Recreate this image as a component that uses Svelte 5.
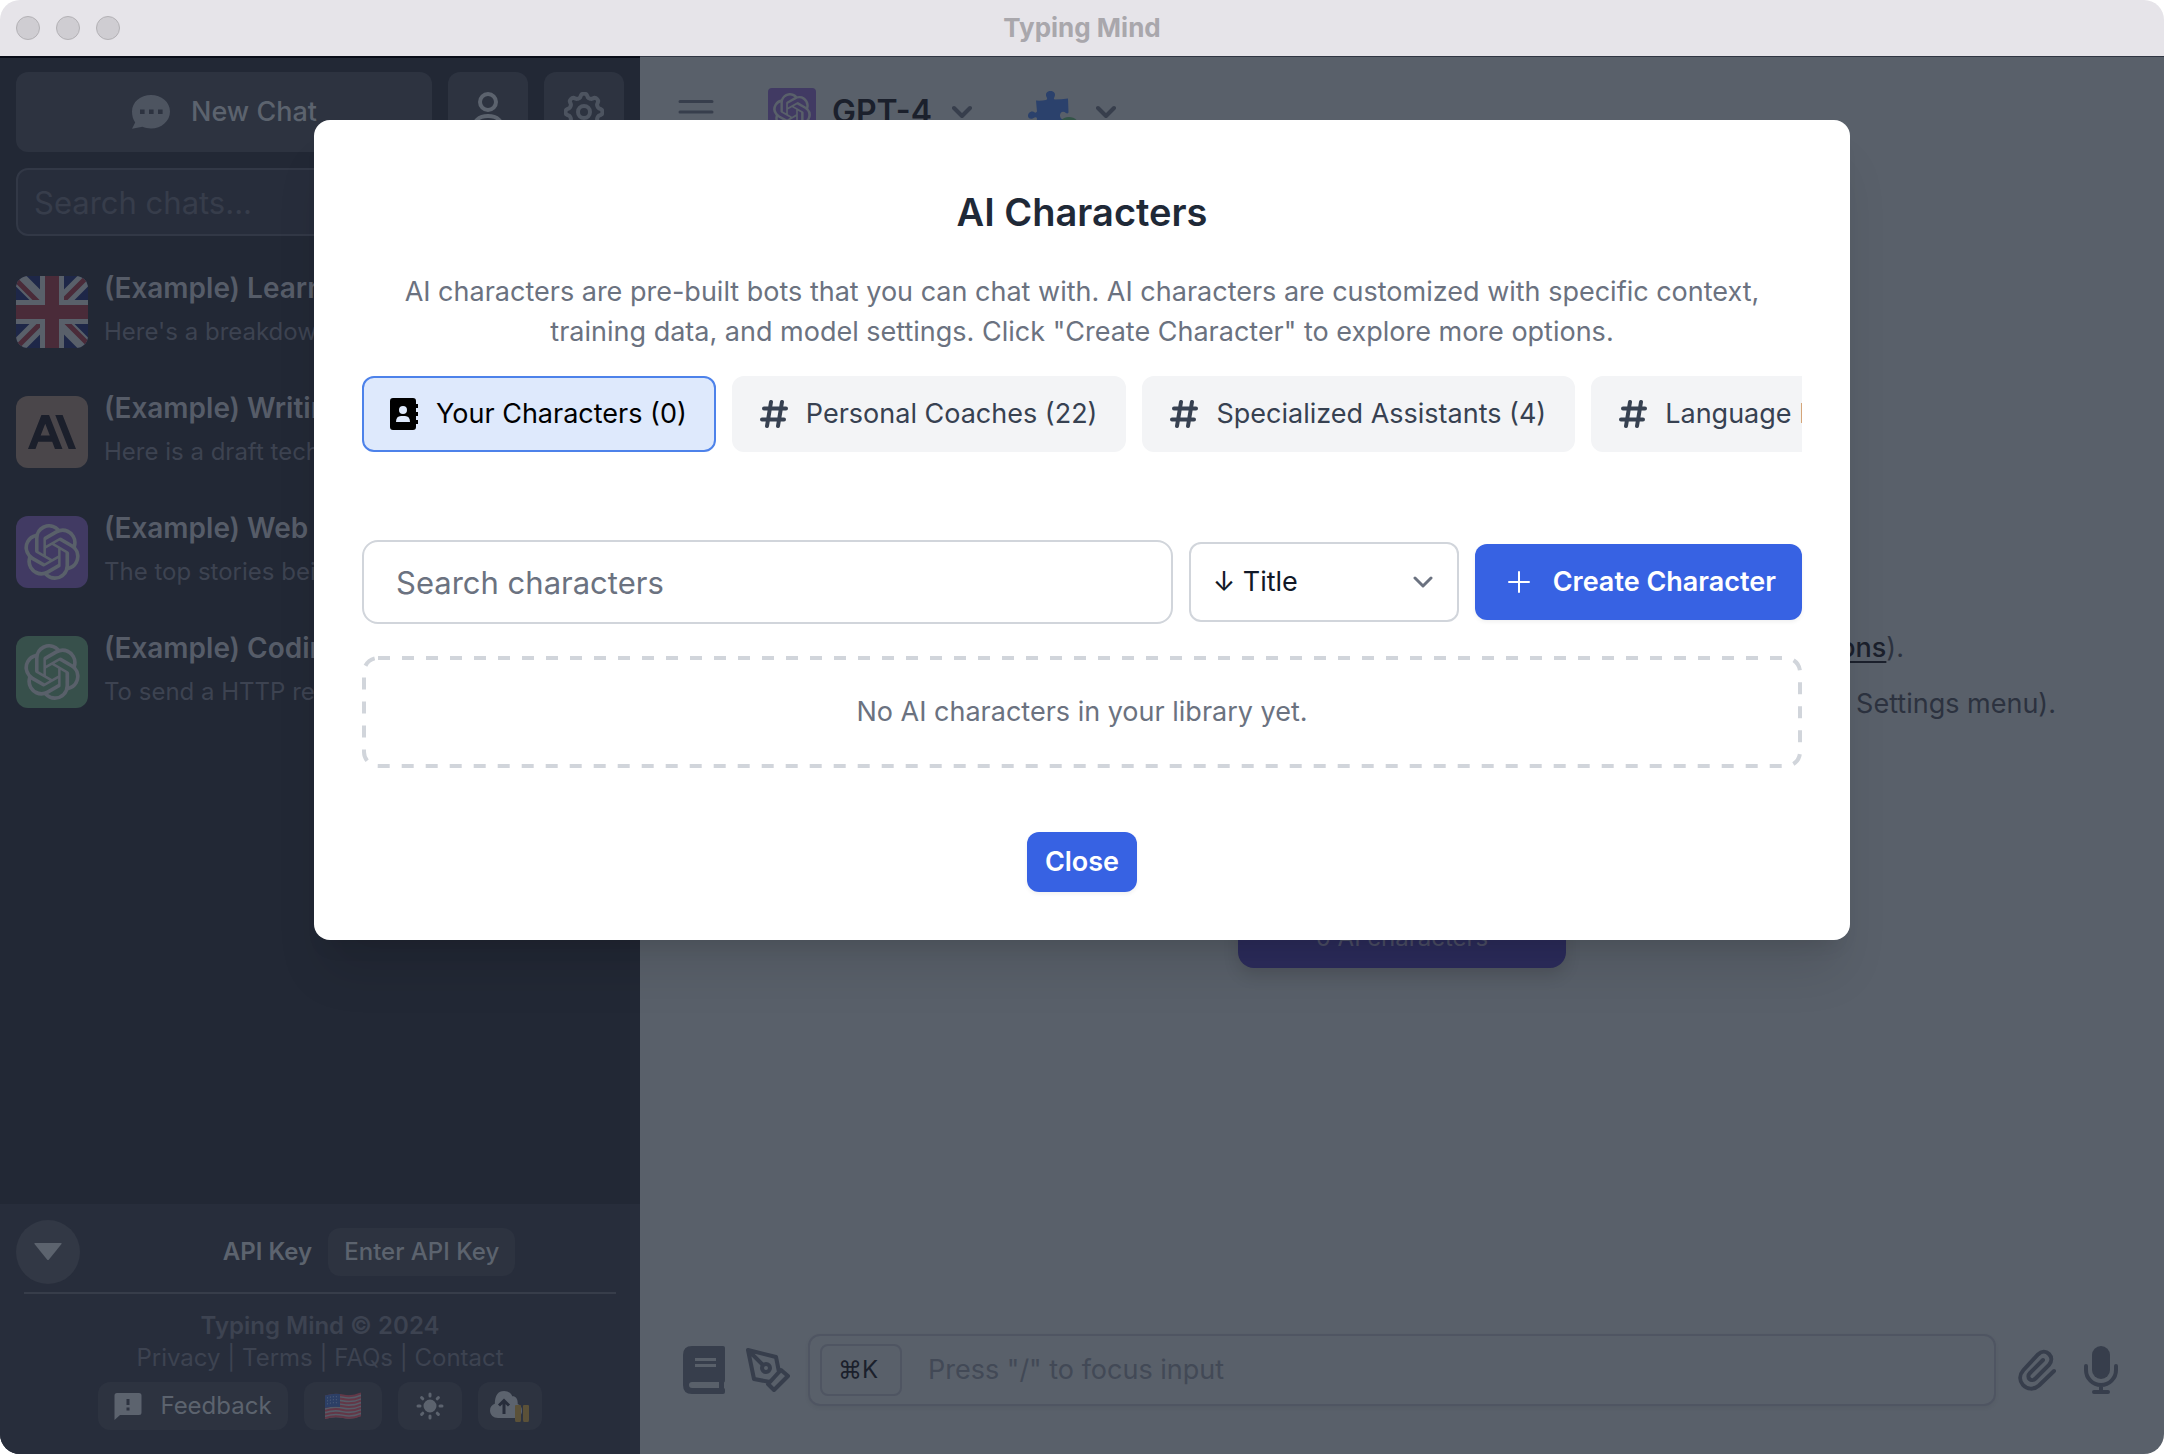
<script>
  const openai =
    'M22.2819 9.8211a5.9847 5.9847 0 0 0-.5157-4.9108 6.0462 6.0462 0 0 0-6.5098-2.9A6.0651 6.0651 0 0 0 4.9807 4.1818a5.9847 5.9847 0 0 0-3.9977 2.9 6.0462 6.0462 0 0 0 .7427 7.0966 5.98 5.98 0 0 0 .511 4.9107 6.051 6.051 0 0 0 6.5146 2.9001A5.9847 5.9847 0 0 0 13.2599 24a6.0557 6.0557 0 0 0 5.7718-4.2058 5.9894 5.9894 0 0 0 3.9977-2.9001 6.0557 6.0557 0 0 0-.7475-7.0729zm-9.022 12.6081a4.4755 4.4755 0 0 1-2.8764-1.0408l.1419-.0804 4.7783-2.7582a.7948.7948 0 0 0 .3927-.6813v-6.7369l2.02 1.1686a.071.071 0 0 1 .038.052v5.5826a4.504 4.504 0 0 1-4.4945 4.4944zm-9.6607-4.1254a4.4708 4.4708 0 0 1-.5346-3.0137l.142.0852 4.783 2.7582a.7712.7712 0 0 0 .7806 0l5.8428-3.3685v2.3324a.0804.0804 0 0 1-.0332.0615L9.74 19.9502a4.4992 4.4992 0 0 1-6.1408-1.6464zM2.3408 7.8956a4.485 4.485 0 0 1 2.3655-1.9728V11.6a.7664.7664 0 0 0 .3879.6765l5.8144 3.3543-2.0201 1.1685a.0757.0757 0 0 1-.071 0l-4.8303-2.7865A4.504 4.504 0 0 1 2.3408 7.872zm16.5963 3.8558L13.1038 8.364 15.1192 7.2a.0757.0757 0 0 1 .071 0l4.8303 2.7913a4.4944 4.4944 0 0 1-.6765 8.1042v-5.6772a.79.79 0 0 0-.407-.667zm2.0107-3.0231l-.142-.0852-4.7735-2.7818a.7759.7759 0 0 0-.7854 0L9.409 9.2297V6.8974a.0662.0662 0 0 1 .0284-.0615l4.8303-2.7866a4.4992 4.4992 0 0 1 6.6802 4.66zM8.3065 12.863l-2.02-1.1638a.0804.0804 0 0 1-.038-.0567V6.0742a4.4992 4.4992 0 0 1 7.3757-3.4537l-.142.0805L8.704 5.459a.7948.7948 0 0 0-.3927.6813zm1.0976-2.3654l2.602-1.4998 2.6069 1.4998v2.9994l-2.5974 1.4997-2.6067-1.4997Z';

  const chats = [
    { logo: 'flag', title: '(Example) Learning', text: "Here's a breakdown" },
    { logo: 'anthropic', title: '(Example) Writing', text: 'Here is a draft tech' },
    { logo: 'violet', title: '(Example) Web Search', text: 'The top stories being' },
    { logo: 'green', title: '(Example) Coding', text: 'To send a HTTP req' }
  ];

  const tabs = [
    { label: 'Your Characters (0)', active: true },
    { label: 'Personal Coaches (22)' },
    { label: 'Specialized Assistants (4)' },
    { label: 'Language Learning (3)' }
  ];

  // Eight soft teeth around a circle
  const gear =
    Array.from({ length: 96 }, (_, i) => {
      const a = (i / 96) * Math.PI * 2;
      const r = 16.5 + 2 * Math.tanh(1.8 * Math.cos(8 * a));
      return `${i ? 'L' : 'M'}${(20 + r * Math.sin(a)).toFixed(2)} ${(20 - r * Math.cos(a)).toFixed(2)}`;
    }).join('') + 'Z';

  const stripes = [0, 1, 2, 3, 4, 5, 6];
</script>

<div class="window">
  <header class="titlebar">
    <div class="lights"><span></span><span></span><span></span></div>
    <h1>Typing Mind</h1>
  </header>

  <div class="app">
    <aside>
      <div class="actions">
        <button class="new-chat">
          <svg width="40" height="36" viewBox="0 0 40 36" aria-hidden="true">
            <path fill="#4d5460" fill-rule="evenodd" d="M20 1C30.500 1 39 8 39 17.500S30.500 34.500 20 34.500c-3 0-6-.6-8.500-1.700L1 34.800l3.200-6.200C2 25.500 1 21.500 1 17.500 1 8 9.500 1 20 1zM9 15.500v4.600h4.600v-4.600zm9 0v4.600h4.600v-4.600zm9 0v4.600h4.600v-4.600z" />
          </svg>
          <span>New Chat</span>
        </button>
        <button class="square" aria-label="Profile">
          <svg width="40" height="40" viewBox="0 0 40 40" fill="none" stroke="#5c636e" stroke-width="4" aria-hidden="true">
            <circle cx="20" cy="10" r="8" /><path d="M5 38c0-9 6-14 15-14s15 5 15 14z" />
          </svg>
        </button>
        <button class="square" aria-label="Settings">
          <svg width="40" height="40" viewBox="0 0 40 40" fill="none" stroke="#4d5460" stroke-width="4" stroke-linejoin="round" aria-hidden="true">
            <path d={gear} /><circle cx="20" cy="20" r="6" />
          </svg>
        </button>
      </div>
      <input class="chat-search" type="search" placeholder="Search chats..." aria-label="Search chats" />

      <ul class="chats">
        {#each chats as chat}
          <li>
            <span class="logo {chat.logo}">
              {#if chat.logo === 'flag'}
                <svg width="72" height="72" viewBox="0 0 72 72" aria-hidden="true">
                  <path fill="#1e2748" d="M0 0h72v72H0z" />
                  <path stroke="#59606a" stroke-width="15" d="M-6-6 78 78M78-6-6 78" />
                  <path stroke="#4a2b39" stroke-width="5" d="M-3 1 33 37M39 33 75-3M75 71 39 35M33 39-3 75" />
                  <path fill="#59606a" d="M24 0h24v24h24v24H48v24H24V48H0V24h24z" />
                  <path fill="#4a2b39" d="M29 0h14v29h29v14H43v29H29V43H0V29h29z" />
                </svg>
              {:else if chat.logo === 'anthropic'}
                <svg width="48" height="48" viewBox="0 0 24 24" aria-hidden="true">
                  <path fill="#1b1f2b" d="M17.300 3.540h-3.670l6.700 16.920H24zM6.700 3.540 0 20.460h3.740l1.370-3.550h7l1.370 3.550h3.750L10.540 3.540zm-.38 10.220 2.300-5.940 2.290 5.940z" />
                </svg>
              {:else}
                <svg width="56" height="56" viewBox="0 0 24 24" aria-hidden="true"><path fill="#59606a" d={openai} /></svg>
              {/if}
            </span>
            <div class="chat-text">
              <strong>{chat.title}</strong>
              <span>{chat.text}</span>
            </div>
          </li>
        {/each}
      </ul>

      <footer>
        <div class="key-row">
          <button class="round" aria-label="Collapse">
            <svg width="28" height="18" viewBox="0 0 28 18" aria-hidden="true"><path fill="#5c636e" d="M1 0h26q1 0 .5 1L15 16.500q-1 1-2 0L.5 1Q0 0 1 0z" /></svg>
          </button>
          <div class="key">
            <strong>API Key</strong>
            <button>Enter API Key</button>
          </div>
        </div>
        <p class="copyright">Typing Mind © 2024</p>
        <p class="links"><a href="#privacy">Privacy</a> | <a href="#terms">Terms</a> | <a href="#faqs">FAQs</a> | <a href="#contact">Contact</a></p>
        <div class="tools">
          <button class="feedback">
            <svg width="28" height="28" viewBox="0 0 28 28" aria-hidden="true">
              <path fill="#5c636e" fill-rule="evenodd" d="M3 1h22q2.500 0 2.500 2.500v17Q27.500 23 25 23H6L.5 28V3.500Q.5 1 3 1zM12.500 7v6h3V7zm0 8.500v3h3v-3z" />
            </svg>
            <span>Feedback</span>
          </button>
          <button class="flag-button" aria-label="Language">
            <svg width="36" height="28" viewBox="0 0 36 28" fill="none" aria-hidden="true">
              <path fill="#565c68" d="M0 4q9-3 18-1t18-2v23q-9 4-18 2T0 27z" />
              {#each stripes as s}
                <path stroke="#633747" stroke-width="2" transform="translate(0 {s * 3.6})" d="M0 4.500q9-3 18-1t18-2" />
              {/each}
              <path fill="#2c3f66" d="M0 3.500q8-2.500 15-1.500v13q-7-1-15 1z" />
              <path stroke="#5a6880" stroke-dasharray="1 2" d="M2 6q6-2 12-1M2 9q6-2 12-1M2 12q6-2 12-1" />
            </svg>
          </button>
          <button class="small" aria-label="Theme">
            <svg width="28" height="28" viewBox="0 0 28 28" stroke="#5c636e" stroke-width="3" stroke-linecap="round" aria-hidden="true">
              <circle cx="14" cy="14" r="5" fill="#5c636e" />
              <path d="M14 2v2M14 24v2M2 14h2M24 14h2M5.600 5.600l1.200 1.200M21.200 21.200l1.200 1.200M5.600 22.400l1.200-1.200M21.200 6.800l1.200-1.200" />
            </svg>
          </button>
          <button class="small" aria-label="Cloud sync">
            <svg width="40" height="32" viewBox="0 0 40 32" aria-hidden="true">
              <path fill="#5c636e" d="M8 28C3.500 28 0 25 0 20.500 0 17 2 14.500 4.800 13.700 5 5.500 8 1 14 1c4 0 7 2 8.300 5.300C25.500 6 28 8.500 27.700 14 30.500 15 32 17 32 21c0 4-3 7-7 7z" />
              <path stroke="#272d3b" stroke-width="3" fill="none" d="M14 24V11M9 15.500l5-5 5 5" />
              <path fill="#5b5138" d="M26 15h4q1 0 1 1v14q0 2-1 2h-4q-1 0-1-2V16q0-1 1-1zM34 15h4q1 0 1 1v14q0 2-1 2h-4q-1 0-1-2V16q0-1 1-1z" />
            </svg>
          </button>
        </div>
      </footer>
    </aside>

    <main>
      <nav>
        <button class="plain menu" aria-label="Menu">
          <svg width="36" height="36" viewBox="0 0 36 36" stroke="#373e4c" stroke-width="3" stroke-linecap="round" aria-hidden="true"><path d="M2 7.500h32M2 18h32M2 28.500h32" /></svg>
        </button>
        <button class="plain model">
          <span class="model-logo"><svg width="38" height="38" viewBox="0 0 24 24" aria-hidden="true"><path fill="#59606a" d={openai} /></svg></span>
          <span>GPT-4</span>
          <svg class="chevron" width="20" height="14" viewBox="0 0 20 14" fill="none" stroke="#373e4c" stroke-width="4" stroke-linecap="round" stroke-linejoin="round" aria-hidden="true"><path d="m2 3 8 8 8-8" /></svg>
        </button>
        <button class="plain plugins" aria-label="Plugins">
          <svg width="52" height="44" viewBox="0 0 52 44" aria-hidden="true">
            <path fill="#2b416c" d="M8 10.500q5 .5 10-.5 2-1 .5-3C17 3.500 19 1 22.500 1s5.500 2.500 4 6q-1.500 2 .5 2.500 6.500 0 13-1l.5 14q-1 1.500-2.500.5c-3-2.500-6-1-6 2.500s3 5 6 2.500l2.500-.5-.5 12H8.500l.5-11q-.5-2-2.500-1C3 30 0 28.500 0 26s2.500-5.500 6-4q2 1.500 3-.5z" />
            <circle cx="41" cy="38" r="11" fill="#345548" />
          </svg>
          <svg width="20" height="14" viewBox="0 0 20 14" fill="none" stroke="#373e4c" stroke-width="4" stroke-linecap="round" stroke-linejoin="round" aria-hidden="true"><path d="m2 3 8 8 8-8" /></svg>
        </button>
      </nav>

      <div class="welcome">
        <p class="first">(<a href="#instructions">instructions</a>).</p>
        <p class="second">Settings menu).</p>
        <button class="library">0 AI characters</button>
      </div>

      <div class="composer">
        <svg width="42" height="48" viewBox="0 0 42 48" aria-hidden="true">
          <path fill="#373e4c" fill-rule="evenodd" d="M9 0h31q2 0 2 2v32q0 2-1 2.500V42q1 .5 1 2v2q0 2-2 2H9q-9 0-9-9V9q0-9 9-9zm3 12v3h21v-3zm0 6v3h21v-3zM9 36q-3 0-3 3t3 3h27v-6z" />
        </svg>
        <svg class="pen" width="44" height="44" viewBox="0 0 44 44" fill="none" stroke="#373e4c" stroke-width="4" stroke-linejoin="round" aria-hidden="true">
          <path d="m2 2 28 7 3 15-9 10L8 31zM2 2l15 15M35 22l7 6-14 14-6-6z" /><circle cx="20" cy="20" r="4" />
        </svg>
        <div class="prompt">
          <kbd>⌘K</kbd>
          <input type="text" placeholder={'Press "/" to focus input'} aria-label="Message" />
        </div>
        <svg class="clip" width="40" height="42" viewBox="0 0 40 42" fill="none" stroke="#373e4c" stroke-width="4" stroke-linecap="round" aria-hidden="true">
          <path d="M36 22 21 36.500c-5 4.500-12 4-16-.5s-3.500-10.500.5-15L20 5.500c3.500-3.500 8-3.500 11-.5s3 7.500 0 11L17.500 29.500c-2 2-4.500 2-6 .5s-1.500-4 .5-6L25 11" />
        </svg>
        <svg class="mic" width="34" height="48" viewBox="0 0 34 48" aria-hidden="true">
          <rect x="8" width="18" height="33" rx="9" fill="#373e4c" />
          <path d="M2 20v4a15 15 0 0 0 30 0v-4M17 39v6M10 46h14" fill="none" stroke="#373e4c" stroke-width="4" stroke-linecap="round" />
        </svg>
      </div>
    </main>
  </div>

  <div class="overlay">
    <div class="modal" role="dialog" aria-modal="true" aria-labelledby="modal-title">
      <h2 id="modal-title">AI Characters</h2>
      <p class="intro">
        AI characters are pre-built bots that you can chat with. AI characters are customized with specific context,<br />
        training data, and model settings. Click "Create Character" to explore more options.
      </p>

      <div class="tabs">
        {#each tabs as tab}
          <button class:active={tab.active}>
            {#if tab.active}
              <svg width="28" height="32" viewBox="0 0 28 32" aria-hidden="true">
                <path fill="#000" fill-rule="evenodd" d="M3 0h20q3 0 3 3v3h2v4h-2v4h2v4h-2v4h2v4h-2v3q0 3-3 3H3q-3 0-3-3V3q0-3 3-3zm10 8a4 4 0 1 0 0 8 4 4 0 1 0 0-8zM6 24h14q0-6-5-6h-4q-5 0-5 6z" />
              </svg>
            {:else}
              <svg width="28" height="28" viewBox="0 0 28 28" stroke="#374151" stroke-width="4" stroke-linecap="round" aria-hidden="true"><path d="M11 2 7 26M22 2l-4 24M4 8.500h22M2 19.500h22" /></svg>
            {/if}
            <span>{tab.label}</span>
          </button>
        {/each}
      </div>

      <div class="toolbar">
        <input type="search" placeholder="Search characters" aria-label="Search characters" />
        <div class="select">
          <select aria-label="Sort by"><option>↓ Title</option></select>
          <svg width="20" height="12" viewBox="0 0 20 12" fill="none" stroke="#6b7280" stroke-width="3" stroke-linecap="round" stroke-linejoin="round" aria-hidden="true"><path d="m2 2 8 8 8-8" /></svg>
        </div>
        <button class="primary create">
          <svg width="24" height="24" viewBox="0 0 24 24" stroke="#fff" stroke-width="2" stroke-linecap="round" aria-hidden="true"><path d="M12 2v20M2 12h20" /></svg>
          <span>Create Character</span>
        </button>
      </div>

      <div class="empty">
        <svg aria-hidden="true"><rect x="2" y="2" rx="14" /></svg>
        <p>No AI characters in your library yet.</p>
      </div>

      <button class="primary close">Close</button>
    </div>
  </div>
</div>

<style>
  :global(body) {
    background: #fff;
    font-family: Inter, 'Liberation Sans', sans-serif;
  }
  * {
    box-sizing: border-box;
    margin: 0;
  }
  button,
  input,
  select {
    font: inherit;
    color: inherit;
    border: 0;
    padding: 0;
    background: none;
  }
  svg {
    flex: none;
    display: block;
  }
  input:focus {
    outline: none;
  }

  .window {
    position: relative;
    display: flex;
    flex-direction: column;
    min-height: 100vh;
    border-radius: 20px;
    overflow: hidden;
    font-size: 27px;
    line-height: 40px;
  }
  .titlebar {
    display: flex;
    align-items: center;
    height: 56px;
    padding: 0 16px;
    background: #e6e4e9;
  }
  .titlebar h1 {
    flex: 1;
    padding-right: 104px;
    text-align: center;
    font-size: 26px;
    font-weight: 700;
    line-height: 32px;
    color: #a9a7ac;
  }
  .lights {
    display: flex;
    gap: 16px;
  }
  .lights span {
    width: 24px;
    height: 24px;
    border: 1px solid #b3b1b5;
    border-radius: 50%;
    background: #cfcdd2;
  }

  .app {
    flex: 1;
    display: flex;
  }
  aside {
    width: 640px;
    flex: none;
    display: flex;
    flex-direction: column;
    border-top: 2px solid #090c18;
    background: #222835;
    color: #5c636e;
  }
  .actions {
    display: flex;
    gap: 16px;
    padding: 14px 16px 16px;
  }
  .actions button {
    height: 80px;
    display: flex;
    align-items: center;
    justify-content: center;
    border-radius: 12px;
    background: #2d3340;
  }
  .actions .new-chat {
    flex: 1;
    gap: 20px;
    font-weight: 500;
  }
  .actions .square {
    width: 80px;
  }
  .chat-search {
    height: 68px;
    margin: 0 16px;
    padding: 0 16px;
    border: 2px solid #323846;
    border-radius: 12px;
    background: #272d3b;
    font-size: 31px;
  }
  .chat-search::placeholder {
    color: #373d4b;
    opacity: 1;
  }
  .chats {
    flex: 1;
    list-style: none;
    padding: 40px 16px 0;
  }
  .chats li {
    display: flex;
    gap: 16px;
    height: 120px;
  }
  .logo {
    flex: none;
    width: 72px;
    height: 72px;
    display: flex;
    align-items: center;
    justify-content: center;
    border-radius: 12px;
    overflow: hidden;
  }
  .anthropic {
    background: #4a464a;
  }
  .violet {
    background: #413a63;
  }
  .green {
    background: #37504b;
  }
  .chat-text {
    display: flex;
    flex-direction: column;
    gap: 8px;
    margin-top: -8px;
    white-space: nowrap;
  }
  .chat-text strong {
    font-weight: 600;
    font-size: 28px;
    color: #565c68;
  }
  .chat-text span {
    font-size: 24px;
    line-height: 32px;
    color: #3d4351;
  }

  footer {
    padding: 16px 16px 24px;
    background: #272d3b;
    text-align: center;
    font-size: 24px;
    line-height: 32px;
  }
  .key-row {
    display: flex;
    align-items: center;
    padding-bottom: 8px;
  }
  .round {
    width: 64px;
    height: 64px;
    display: flex;
    align-items: center;
    justify-content: center;
    border-radius: 50%;
    background: #323845;
  }
  .key {
    flex: 1;
    display: flex;
    justify-content: center;
    align-items: center;
    gap: 16px;
    padding-left: 34px;
  }
  .key strong {
    font-weight: 600;
  }
  .key button {
    height: 48px;
    padding: 0 16px;
    border-radius: 12px;
    background: #2d3340;
    font-weight: 500;
  }
  .copyright {
    margin: 0 8px;
    padding-top: 16px;
    border-top: 2px solid #373d4a;
    font-weight: 600;
    color: #3d4351;
  }
  .links,
  .links a {
    color: #3d4351;
    text-decoration: none;
  }
  .tools {
    display: flex;
    justify-content: center;
    gap: 16px;
    padding-top: 8px;
  }
  .tools button {
    height: 48px;
    display: flex;
    align-items: center;
    justify-content: center;
    border-radius: 12px;
    background: #2d3340;
  }
  .tools .feedback {
    gap: 18px;
    padding: 0 16px;
  }
  .tools .flag-button {
    width: 78px;
  }
  .tools .small {
    width: 64px;
  }

  main {
    flex: 1;
    display: flex;
    flex-direction: column;
    border-top: 1px solid #2f3542;
    background: #59606a;
    color: #2c323f;
  }
  nav {
    display: flex;
    align-items: center;
    height: 110px;
    padding: 0 38px;
  }
  .plain {
    display: flex;
    align-items: center;
  }
  .model {
    gap: 16px;
    margin: 0 56px 0 54px;
    font-size: 32px;
    font-weight: 600;
    color: #1b202c;
  }
  .chevron {
    margin-left: 4px;
  }
  .model-logo {
    width: 48px;
    height: 48px;
    display: flex;
    align-items: center;
    justify-content: center;
    border-radius: 4px;
    background: #413a63;
  }
  .plugins {
    gap: 16px;
  }
  .welcome {
    flex: 1;
    display: flex;
    flex-direction: column;
    align-items: flex-end;
    padding: 461px 108px 0 0;
  }
  .welcome a {
    color: #1b202c;
    font-weight: 500;
    text-underline-offset: 4px;
  }
  .first {
    padding-right: 152px;
    margin-bottom: 16px;
  }
  .library {
    align-self: center;
    width: 328px;
    height: 100px;
    margin: 144px -108px 0 0;
    padding-top: 40px;
    border-radius: 16px;
    background: #2c2c5c;
    box-shadow: 0 8px 16px rgb(0 0 0 / 0.12);
    font-size: 24px;
    color: #4c4f66;
  }
  .composer {
    display: flex;
    align-items: center;
    padding: 0 46px 48px 43px;
  }
  .pen {
    margin: 0 18px 0 21px;
  }
  .clip {
    margin: 0 26px 0 22px;
  }
  .prompt {
    flex: 1;
    display: flex;
    align-items: center;
    gap: 26px;
    height: 72px;
    padding: 0 10px;
    border: 2px solid #4f5562;
    border-radius: 12px;
    box-shadow: 0 2px 4px rgb(0 0 0 / 0.05);
  }
  .prompt kbd {
    width: 82px;
    height: 52px;
    padding-left: 16px;
    border: 2px solid #4f5562;
    border-radius: 8px;
    font-family: inherit;
    font-size: 24px;
    line-height: 48px;
    color: #1b202c;
  }
  .prompt input {
    flex: 1;
  }
  .prompt input::placeholder {
    color: #424956;
    opacity: 1;
  }

  .overlay {
    position: absolute;
    inset: 0;
    display: flex;
    justify-content: center;
    align-items: flex-start;
    padding: 120px 32px 32px;
  }
  .modal {
    width: 100%;
    max-width: 1536px;
    display: flex;
    flex-direction: column;
    padding: 64px 48px 48px;
    border-radius: 16px;
    background: #fff;
    box-shadow:
      0 40px 50px -10px rgb(0 0 0 / 0.1),
      0 16px 20px -12px rgb(0 0 0 / 0.1);
  }
  .modal h2 {
    text-align: center;
    font-size: 38px;
    font-weight: 600;
    line-height: 56px;
    color: #1f2937;
  }
  .intro {
    margin-top: 32px;
    text-align: center;
    color: #6b7280;
  }
  .tabs {
    display: flex;
    gap: 16px;
    margin-top: 24px;
    overflow-x: auto;
    scrollbar-width: none;
  }
  .tabs button {
    flex: none;
    height: 76px;
    display: flex;
    align-items: center;
    gap: 18px;
    padding: 0 27px 0 26px;
    border: 2px solid #f3f4f6;
    border-radius: 12px;
    background: #f3f4f6;
    color: #374151;
    white-space: nowrap;
  }
  .tabs .active {
    border-color: #4d82ea;
    background: #dee9fc;
    color: #000;
  }
  .toolbar {
    display: flex;
    align-items: center;
    gap: 16px;
    margin-top: 88px;
  }
  .toolbar input {
    flex: 1;
    min-width: 0;
    height: 84px;
    padding: 0 32px;
    border: 2px solid #d1d5db;
    border-radius: 16px;
    font-size: 31px;
    color: #111827;
  }
  .toolbar input::placeholder {
    color: #6b7280;
    opacity: 1;
  }
  .select {
    display: grid;
    align-items: center;
    width: 270px;
  }
  .select > * {
    grid-area: 1 / 1;
  }
  .select svg {
    justify-self: end;
    margin-right: 26px;
    pointer-events: none;
  }
  select {
    appearance: none;
    width: 100%;
    height: 80px;
    padding: 0 22px;
    border: 2px solid #d1d5db;
    border-radius: 12px;
    background: #fff;
    color: #111827;
  }
  .primary {
    border-radius: 12px;
    background: #3762e3;
    box-shadow: 0 2px 4px rgb(0 0 0 / 0.06);
    font-weight: 600;
    color: #fff;
  }
  .create {
    display: flex;
    align-items: center;
    gap: 22px;
    height: 76px;
    padding: 0 26px 0 32px;
    white-space: nowrap;
  }
  .empty {
    display: grid;
    margin-top: 32px;
    color: #6b7280;
  }
  .empty > * {
    grid-area: 1 / 1;
  }
  .empty p {
    padding: 36px;
    text-align: center;
  }
  .empty svg {
    width: 100%;
    height: 0;
    min-height: 100%;
  }
  .empty rect {
    width: calc(100% - 4px);
    height: calc(100% - 4px);
    fill: none;
    stroke: #d1d5db;
    stroke-width: 4px;
    stroke-dasharray: 12px 12px;
  }
  .close {
    align-self: center;
    height: 60px;
    margin-top: 64px;
    padding: 0 18px;
  }
</style>
